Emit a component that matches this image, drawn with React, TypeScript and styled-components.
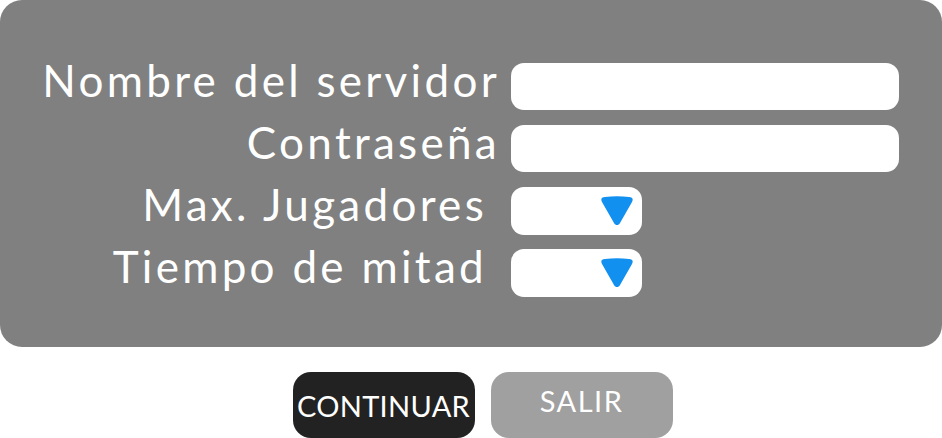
import React from "react";
import styled, { createGlobalStyle } from "styled-components";

const Global = createGlobalStyle`
  html, body { margin: 0; padding: 0; background: #ffffff; }
  body { font-family: "Lato", "Open Sans", sans-serif; overflow: hidden; }
`;

const Page = styled.div`
  width: 942px;
  height: 438px;
  display: flex;
  flex-direction: column;
`;

const Panel = styled.div`
  background: #808080;
  border-radius: 22px;
  height: 347px;
  box-sizing: border-box;
  padding-top: 63px;
  display: grid;
  grid-template-columns: 497px auto;
  grid-auto-rows: 47px;
  column-gap: 14px;
  row-gap: 15px;
  align-content: start;
`;

const Label = styled.label<{ $inset?: number }>`
  color: #ffffff;
  font-size: 44px;
  letter-spacing: 3.3px;
  text-align: right;
  white-space: nowrap;
  line-height: 47px;
  padding-right: ${(p) => p.$inset ?? 0}px;
  margin-right: -3px;
  margin-top: -6px;
`;

const TextInput = styled.div`
  width: 388px;
  height: 47px;
  background: #ffffff;
  border-radius: 13px;
`;

const Select = styled.div`
  width: 131px;
  height: 48px;
  background: #ffffff;
  border-radius: 13px;
  display: flex;
  justify-content: flex-end;
  align-items: flex-start;
  padding: 9px 9px 0 0;
  box-sizing: border-box;
`;

const Buttons = styled.div`
  display: flex;
  justify-content: center;
  gap: 16px;
  margin-top: 25px;
  padding-left: 23px;
`;

const Button = styled.button<{ $dark?: boolean }>`
  width: 182px;
  height: 66px;
  border: none;
  border-radius: 18px;
  background: ${(p) => (p.$dark ? "#222222" : "#a0a0a0")};
  color: #ffffff;
  font-family: "Lato", sans-serif;
  font-size: 29px;
  letter-spacing: ${(p) => (p.$dark ? "0.3px" : "1.5px")};
  padding: 0;
  display: flex;
  justify-content: center;
  align-items: ${(p) => (p.$dark ? "center" : "flex-start")};
  padding-top: ${(p) => (p.$dark ? "0" : "11px")};
  box-sizing: border-box;
`;

const Arrow = () => (
  <svg width="32" height="30" viewBox="0 0 32 30">
    <path
      d="M4 1 C0.5 1 -0.5 3 1 6 L13 27 C14.5 29.8 17.5 29.8 19 27 L31 6 C32.5 3 31.5 1 28 1 Q16 -0.5 4 1 Z"
      fill="#1190f0"
    />
  </svg>
);

export default function App() {
  return (
    <Page>
      <Global />
      <Panel>
        <Label>Nombre del servidor</Label>
        <TextInput />
        <Label>Contraseña</Label>
        <TextInput />
        <Label $inset={13}>Max. Jugadores</Label>
        <Select>
          <Arrow />
        </Select>
        <Label $inset={13}>Tiempo de mitad</Label>
        <Select>
          <Arrow />
        </Select>
      </Panel>
      <Buttons>
        <Button $dark>CONTINUAR</Button>
        <Button>SALIR</Button>
      </Buttons>
    </Page>
  );
}
